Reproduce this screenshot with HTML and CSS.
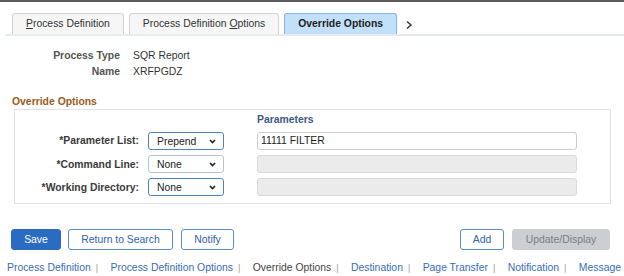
FILE: index.html
```html
<!DOCTYPE html>
<html lang="en">
<head>
  <meta charset="UTF-8" />
  <title>Override Options</title>
  <link rel="stylesheet" href="styles.css">
</head>
<body>

  <div class="tabbar">
    <div class="tab"><u>P</u>rocess Definition</div>
    <div class="tab">Process Definition <u>O</u>ptions</div>
    <div class="tab active">Override Options</div>
    <svg class="tab-next" width="8" height="10" viewBox="0 0 8 10">
      <path d="M2 1.5 L6 5 L2 8.5" fill="none" stroke="#333" stroke-width="1.5" />
    </svg>
  </div>

  <div class="info">
    <div class="info-row"><span class="info-label">Process Type</span><span>SQR Report</span></div>
    <div class="info-row"><span class="info-label">Name</span><span>XRFPGDZ</span></div>
  </div>

  <h2 class="section-title">Override Options</h2>

  <div class="group">
    <div class="grid">
      <div></div>
      <div></div>
      <div class="col-head">Parameters</div>

      <label class="field-label">*Parameter List:</label>
      <div class="select focus">
        <span>Prepend</span>
        <svg width="7" height="5" viewBox="0 0 7 5"><path d="M1 1 L3.5 3.5 L6 1" fill="none" stroke="#222" stroke-width="1.6" /></svg>
      </div>
      <div class="input">11111 FILTER</div>

      <label class="field-label">*Command Line:</label>
      <div class="select">
        <span>None</span>
        <svg width="7" height="5" viewBox="0 0 7 5"><path d="M1 1 L3.5 3.5 L6 1" fill="none" stroke="#222" stroke-width="1.6" /></svg>
      </div>
      <div class="input disabled"></div>

      <label class="field-label">*Working Directory:</label>
      <div class="select focus">
        <span>None</span>
        <svg width="7" height="5" viewBox="0 0 7 5"><path d="M1 1 L3.5 3.5 L6 1" fill="none" stroke="#222" stroke-width="1.6" /></svg>
      </div>
      <div class="input disabled"></div>
    </div>
  </div>

  <div class="buttons">
    <div class="btn-left">
      <button class="btn primary w-save">Save</button>
      <button class="btn w-return">Return to Search</button>
      <button class="btn w-notify">Notify</button>
    </div>
    <div class="btn-right">
      <button class="btn w-add">Add</button>
      <button class="btn disabled w-update">Update/Display</button>
    </div>
  </div>

  <div class="footer-links">
    <a href="#">Process Definition</a><span class="sep">|</span>
    <a href="#">Process Definition Options</a><span class="sep">|</span>
    <span class="current">Override Options</span><span class="sep">|</span>
    <a href="#">Destination</a><span class="sep">|</span>
    <a href="#">Page Transfer</a><span class="sep">|</span>
    <a href="#">Notification</a><span class="sep">|</span>
    <a href="#">Message</a>
  </div>

</body>
</html>
```

FILE: styles.css
```css
* {
  box-sizing: border-box;
}

body {
  margin: 0;
  font-family: 'Liberation Sans', Arial, sans-serif;
  font-size: 10.4px;
  color: #333;
  background: #fff;
  border-top: 2px solid #5c5c5c;
}

/* tabs */

.tabbar {
  display: flex;
  align-items: center;
  gap: 5px;
  margin: 11px 0 0 5px;
  padding-left: 7px;
  border-bottom: 2px solid #e6ebf0;
}

.tab {
  height: 21px;
  line-height: 19px;
  padding: 0 13px;
  border: 1px solid #cfd3d7;
  border-bottom: none;
  border-radius: 3px 3px 0 0;
  background: #f6f6f6;
  color: #333;
  white-space: nowrap;
}

.tab.active {
  background: #c3e0fb;
  border-color: #86b6e6;
  font-weight: bold;
  color: #222;
}

.tab-next {
  margin-left: 3px;
  margin-top: 2px;
}

/* process info */

.info {
  margin-top: 12px;
}

.info-row {
  display: flex;
  gap: 13px;
  line-height: 16px;
  color: #333;
}

.info-label {
  width: 120px;
  text-align: right;
  font-weight: bold;
  color: #555;
}

.section-title {
  margin: 15px 0 0 12px;
  font-size: 10.4px;
  line-height: 14px;
  font-weight: bold;
  color: #9b5a1c;
}

/* override group */

.group {
  margin-left: 14px;
  width: 597px;
  height: 95px;
  border: 1px solid #dfe3e8;
  padding-top: 5px;
}

.grid {
  display: grid;
  grid-template-columns: 133px 109px 320px;
  grid-template-rows: 12px 18px 18px 18px;
  row-gap: 5px;
  align-items: center;
}

.grid > :nth-child(4) {
  margin-top: -1px;
}

.col-head {
  font-weight: bold;
  color: #3e5b86;
  line-height: 12px;
  margin-top: -2px;
}

.field-label {
  text-align: right;
  padding-right: 9px;
  font-weight: bold;
  color: #3a3a3a;
}

.select {
  width: 76px;
  height: 18px;
  display: flex;
  align-items: center;
  justify-content: space-between;
  padding: 0 7px 0 8px;
  border: 1px solid #b9c2cc;
  border-radius: 3px;
  background: #fff;
  color: #222;
}

.select.focus {
  border-color: #4f82c3;
}

.input {
  height: 18px;
  line-height: 16px;
  padding-left: 3px;
  border: 1px solid #c9cdd2;
  border-radius: 3px;
  background: #fff;
  color: #222;
}

.input.disabled {
  background: #ebebeb;
  border-color: #dadada;
}

/* buttons */

.buttons {
  display: flex;
  justify-content: space-between;
  margin-top: 25px;
  padding: 0 14px 0 11px;
}

.btn-left,
.btn-right {
  display: flex;
  gap: 7px;
}

.btn-right {
  gap: 8px;
}

.btn {
  height: 21px;
  padding: 0;
  font-family: inherit;
  font-size: 10.4px;
  color: #2f63ab;
  background: #fff;
  border: 1px solid #5a8ccb;
  border-radius: 3px;
}

.btn.primary {
  background: #2b6cc3;
  border-color: #2b6cc3;
  color: #fff;
}

.btn.disabled {
  background: #cbced3;
  border-color: #cbced3;
  color: #7a7e84;
}

.w-save { width: 50px; }
.w-return { width: 105px; }
.w-notify { width: 53px; margin-left: 1px; }
.w-add { width: 44px; }
.w-update { width: 98px; }

/* footer */

.footer-links {
  margin: 11px 0 0 7px;
  line-height: 14px;
  white-space: nowrap;
}

.footer-links a {
  color: #3a6db5;
  text-decoration: none;
}

.footer-links .current {
  color: #444;
}

.sep {
  color: #999;
  font-size: 9px;
  margin: 0 9.5px 0 5px;
}
```
